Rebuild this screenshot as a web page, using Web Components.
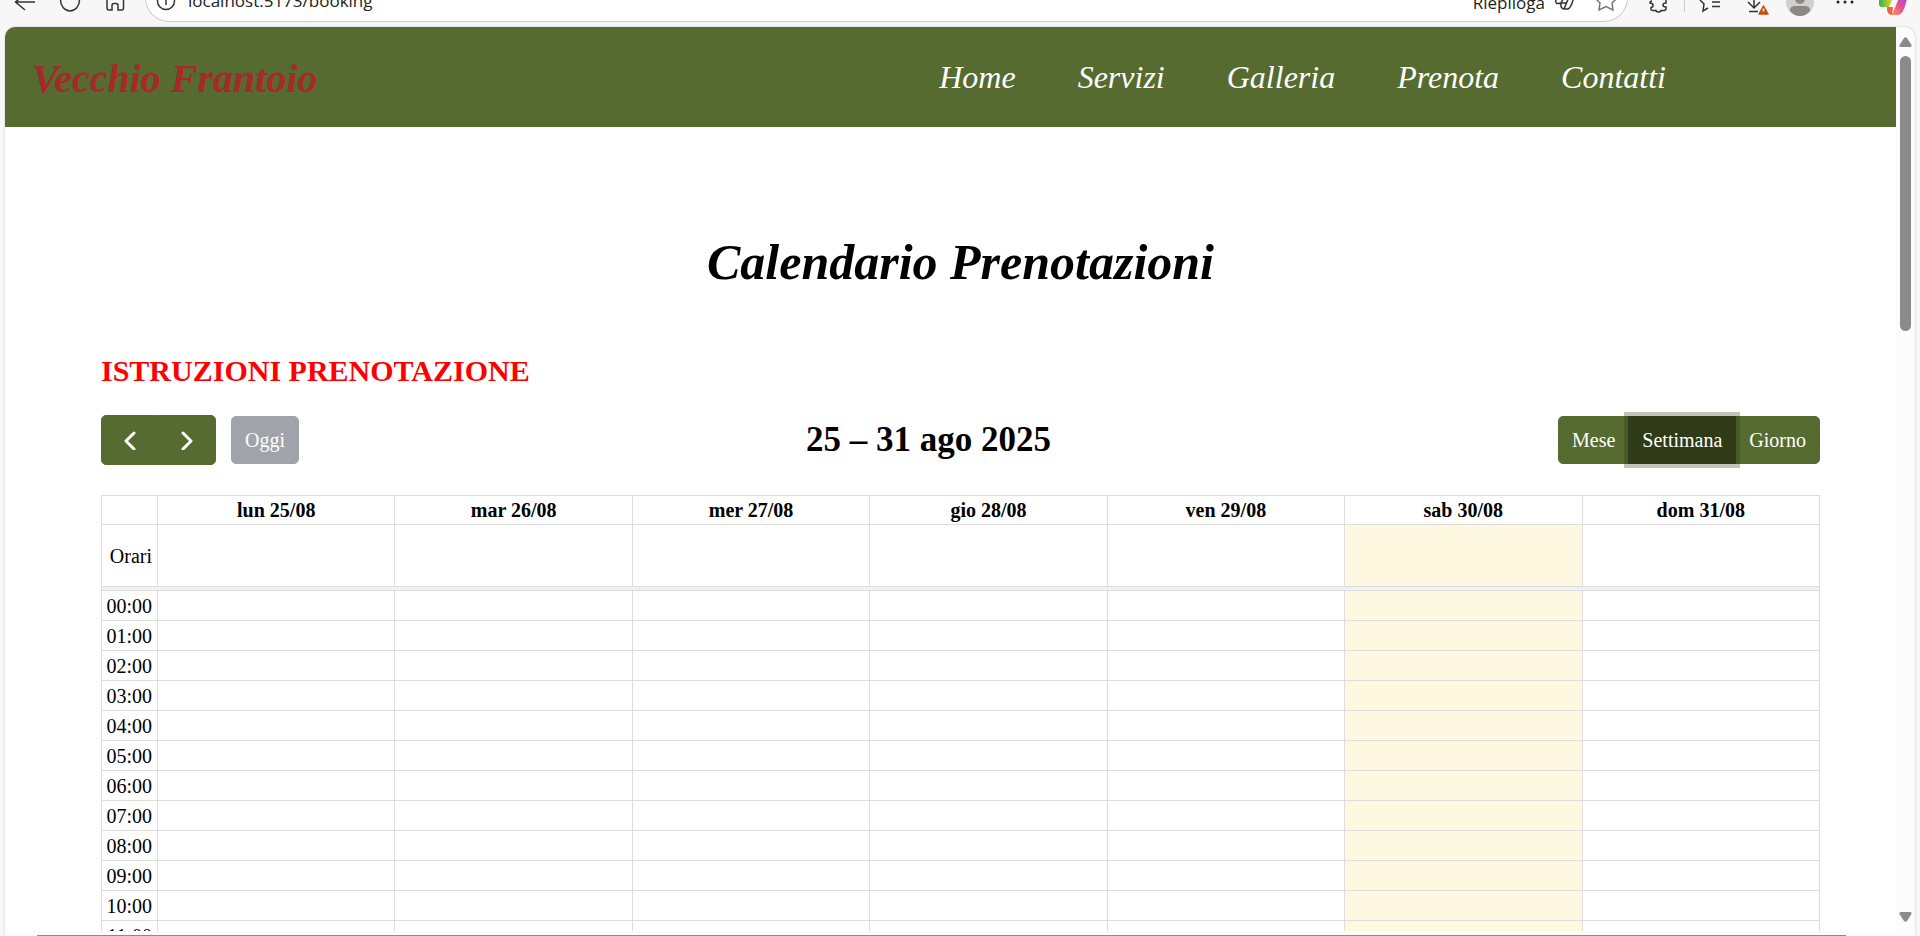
<!DOCTYPE html>
<html lang="it">
<head>
<meta charset="utf-8">
<title>Vecchio Frantoio</title>
<style>
html,body{height:100%}
body{margin:0;background:#f7f7f7;font-family:"Liberation Serif",serif;font-size:20px;color:#000;overflow:hidden}
</style>
</head>
<body>
<browser-window>
  <browser-bar slot="bar"></browser-bar>
  <site-header>
    <nav-link href="#home">Home</nav-link>
    <nav-link href="#servizi">Servizi</nav-link>
    <nav-link href="#galleria">Galleria</nav-link>
    <nav-link href="#prenota">Prenota</nav-link>
    <nav-link href="#contatti">Contatti</nav-link>
  </site-header>
  <booking-page>
    <span slot="title">Calendario Prenotazioni</span>
    <span slot="info">ISTRUZIONI PRENOTAZIONE</span>
    <calendar-toolbar>25 – 31 ago 2025</calendar-toolbar>
    <week-calendar></week-calendar>
  </booking-page>
</browser-window>
<script>
function define(name, html, init) {
  customElements.define(name, class extends HTMLElement {
    constructor() {
      super();
      this.attachShadow({ mode: 'open' }).innerHTML = html;
    }
    connectedCallback() { if (init) init(this, this.shadowRoot); }
  });
}

define('browser-window', `
<style>
:host{display:flex;flex-direction:column;height:100vh;overflow:hidden}
.frame{flex:1;min-height:0;margin:0 5px;display:grid;grid-template-columns:minmax(0,1fr) 19px;grid-template-rows:minmax(0,1fr) 5px;background:#fcfcfc;border-radius:10px 10px 0 0;overflow:hidden;box-shadow:0 0 2px #bbb}
.page{background:#fff;overflow:hidden}
.v{display:flex;flex-direction:column;align-items:center;padding:10px 0 9px;gap:9px}
.v .thumb{width:11px;height:275px;border-radius:6px;background:#8b8b8b}
.v .space{flex:1}
.h{grid-column:1/-1;display:flex;align-items:flex-end;padding:0 69px 0 32px}
.h .thumb{flex:1;height:1px;background:#8b8b8b}
svg{display:block;fill:#8b8b8b}
</style>
<slot name="bar"></slot>
<div class="frame">
  <div class="page"><slot></slot></div>
  <div class="v">
    <svg width="13" height="10"><path d="M5 1q1.500-1.500 3 0l4.500 7q.5 2-1.500 2h-9q-2 0-1.500-2z"/></svg>
    <div class="thumb"></div><div class="space"></div>
    <svg width="13" height="10"><path d="M5 9q1.500 1.500 3 0l4.500-7q.5-2-1.500-2h-9q-2 0-1.500 2z"/></svg>
  </div>
  <div class="h"><div class="thumb"></div></div>
</div>`);

define('browser-bar', `
<style>
:host{display:flex;height:27px;align-items:flex-end;overflow:hidden}
button{border:0;background:none;padding:0;display:block}
svg{display:block;flex:none;fill:none;stroke:#333;stroke-width:1.500}
.left{width:145px;flex:none}
.field{flex:1;box-sizing:border-box;height:48px;margin-bottom:5px;border:1px solid #c8c8c8;border-radius:24px;background:#fff;display:flex;align-items:flex-end;padding:0 10px;gap:12px}
.left,.right{display:flex;align-items:flex-start;height:27px}
.field button{height:22px}
input,.sum{font:17px/24px "Open Sans","Noto Sans",sans-serif;color:#222}
input{flex:1;min-width:0;height:24px;box-sizing:border-box;border:0;outline:0;padding:0;background:none;margin-bottom:8px}
.sum{display:flex;align-items:flex-end;gap:10px;margin-right:8px}
.sum span{margin-bottom:6px}
.right{width:292px;flex:none}
</style>
<div class="left">
  <svg width="145" height="27"><path d="M35 2H16M25 10 15.500 2 25-6"/><path d="M60.500 0a9.500 11 0 0 0 19 0v-2"/><path d="M107-2V8q0 2 2 2h3V5.500q0-2 2-2h2q2 0 2 2V10h3.500q2 0 2-2V-2"/></svg>
</div>
<div class="field">
  <button aria-label="Informazioni sul sito"><svg width="20" height="22"><circle cx="10" cy="2" r="8.500"/><path d="M10 1v5"/></svg></button>
  <input aria-label="Indirizzo" value="localhost:5173/booking">
  <button class="sum"><span>Riepiloga</span><svg width="20" height="22"><path d="M1 0c-1 5 1 5 5 4l3-6M6 4q-1 6 4 6h3q3-1 6-12M9 10l5-12M6 4h6"/></svg></button>
  <button aria-label="Preferiti"><svg width="22" height="22"><path stroke="#777" d="M1 0l4 4-1 7 7-3.500 7 3.500-1-7 4-4"/></svg></button>
</div>
<div class="right">
  <svg width="292" height="27"><defs><linearGradient id="warm" x1="0" y1="1" x2="1" y2="0"><stop offset="0" stop-color="#ff9a5c"/><stop offset=".5" stop-color="#f0528c"/><stop offset="1" stop-color="#a044e8"/></linearGradient><linearGradient id="cool"><stop offset="0" stop-color="#35b34a"/><stop offset="1" stop-color="#e8d62c"/></linearGradient></defs>
  <path d="M24 1q-2 0-2 2 3 0 3 2.500 0 2-2 2v2q0 1 2 1h3q0 1.500 2.500 1.500t2.500-1.500h3q2 0 2-2V7q-3 0-3-2t3-2V0"/><path stroke="#ccc" stroke-width="1" d="M56.500 0v12"/><path d="M72 0l4 4-1 7 5-3M84 2h8M84 6.500h8"/><path d="M126-1V8M120 2l6 6 6-6M121 11.500h9"/><path fill="#c8500f" stroke="#c8500f" stroke-linejoin="round" d="M135.500 6l4.500 8h-9z"/><path stroke="#fff" d="M135.500 8.500v3"/><circle cx="172" cy="2" r="14" fill="#d2d0ce" stroke="none"/><path stroke="none" fill="#8d8785" d="M162 11q0-5 5-5h10q5 0 5 5-4 5-10 5t-10-5"/><circle cx="172" cy="-1" r="5" fill="#8d8785" stroke="none"/><g fill="#222" stroke="none"><circle cx="210" cy="2" r="1.500"/><circle cx="217" cy="2" r="1.500"/><circle cx="224" cy="2" r="1.500"/></g>
  <g stroke="none"><path fill="url(#cool)" d="M251-2V5q1 3 6 2h4l4-9z"/><path fill="#f4633a" d="M259 7h6l-1 8q-4 0-5-5z"/><path fill="url(#warm)" d="M279-2q-1 7-4 13-2 4-6 4h-7q3-1 4-5l5-12z"/></g></svg>
</div>`);

define('site-header', `
<style>
:host{display:flex;justify-content:space-between;align-items:center;height:100px;padding:0 230px 0 27px;background:#556b2f}
h1{margin:0;padding-top:4px;font-size:40px;line-height:48px;font-style:italic;color:#a52a2a}
nav{display:flex;gap:62px}
</style>
<h1>Vecchio Frantoio</h1>
<nav><slot></slot></nav>`);

define('nav-link', `
<style>
:host{display:block}
a{color:#fff;text-decoration:none;font-size:32px;line-height:40px;font-style:italic}
</style>
<a><slot></slot></a>`, (el, root) => { root.querySelector('a').href = el.getAttribute('href'); });

define('booking-page', `
<style>
:host{display:block;padding:102px 76px 0 96px}
h1{margin:0;font-size:50px;line-height:66px;font-style:italic;text-align:center}
h2{margin:58px 0 26px;font-size:30px;line-height:36px;color:#f00}
</style>
<h1><slot name="title"></slot></h1>
<h2><slot name="info"></slot></h2>
<slot></slot>`);

define('calendar-toolbar', `
<style>
:host{display:flex;justify-content:space-between;align-items:center;height:50px;margin-bottom:30px}
div{display:flex;align-items:center}
button{font:20px/24px "Liberation Serif",serif;color:#fff;background:#556b2f;border:1px solid #556b2f;padding:11px 13px;height:48px}
.arrow{height:50px;width:58px;display:grid;place-items:center}
.first{border-radius:5px 0 0 5px}
.last{border-radius:0 5px 5px 0}
.on,.last{margin-left:-1px}
.today{margin-left:15px;border-radius:5px;background:#a0a4aa;border-color:#a0a4aa}
.on{background:#2f3b17;border-color:#2f3b17;box-shadow:0 0 0 4px rgba(47,59,23,.3);position:relative}
h2{margin:0;font-size:35px;line-height:42px}
svg{fill:none;stroke:#fff;stroke-width:3;stroke-linecap:round;stroke-linejoin:round}
</style>
<div><button class="arrow first" aria-label="Precedente"><svg width="12" height="20"><path d="M10 3 2 11l8 8"/></svg></button><button class="arrow last" aria-label="Successivo"><svg width="12" height="20"><path d="M2 3l8 8-8 8"/></svg></button><button class="today">Oggi</button></div>
<h2><slot></slot></h2>
<div><button class="first">Mese</button><button class="on" aria-pressed="true">Settimana</button><button class="last">Giorno</button></div>`);

define('week-calendar', `
<style>
:host{display:block}
table{width:100%;table-layout:fixed;border-collapse:collapse;border:1px solid #ddd}
th,td{box-sizing:border-box;border:1px solid #ddd;padding:0;height:30px;line-height:24px}
.axis{width:56px}
thead th,thead td{height:29px}
tbody th{font-weight:400;text-align:right;padding-right:5px}
.all th,.all td{height:62px}
.split td{height:4px;background:#f1f1f1}
.today{background:#fff8e1}
</style>
<table><thead><tr></tr></thead><tbody></tbody></table>`, (el, root) => {
  const days = ['lun 25/08', 'mar 26/08', 'mer 27/08', 'gio 28/08', 'ven 29/08', 'sab 30/08', 'dom 31/08'];
  const today = 5;
  const cells = days.map((d, i) => i === today ? '<td class="today"></td>' : '<td></td>').join('');
  const hours = Array.from({ length: 24 }, (_, h) => String(h).padStart(2, '0') + ':00');
  root.querySelector('thead tr').innerHTML = '<td class="axis"></td>' + days.map(d => `<th scope="col">${d}</th>`).join('');
  root.querySelector('tbody').innerHTML =
    `<tr class="all"><th scope="row">Orari</th>${cells}</tr><tr class="split"><td colspan="8"></td></tr>` +
    hours.map(h => `<tr><th scope="row">${h}</th>${cells}</tr>`).join('');
});
</script>
</body>
</html>
